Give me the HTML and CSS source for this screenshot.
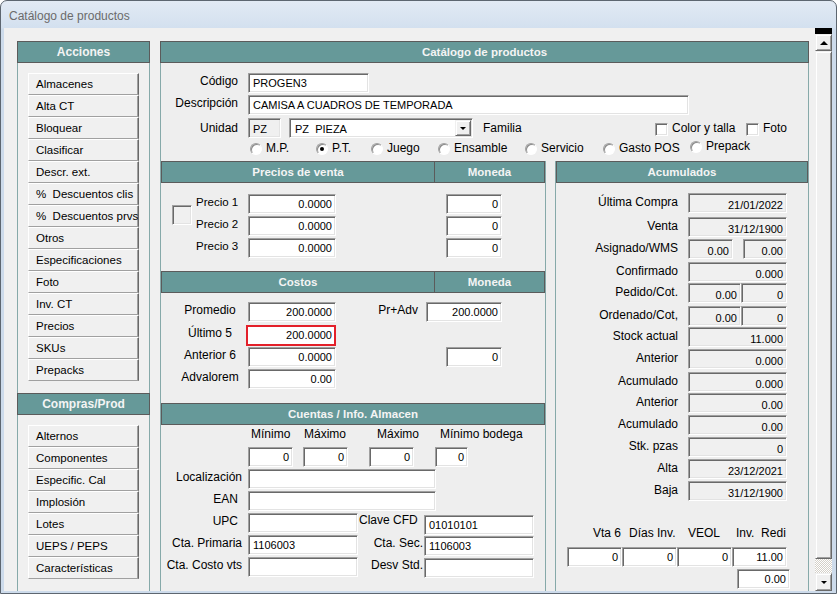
FILE: index.html
```html
<!DOCTYPE html>
<html lang="es">
<head>
<meta charset="utf-8">
<title>Catálogo de productos</title>
<link rel="stylesheet" href="styles.css">
</head>
<body>
<div class="window">
  <div class="titlebar">Catálogo de productos</div>
  <div class="client">
    <div class="content">
      <aside class="sidebar">
        <div class="hdr">Acciones</div>
        <div class="btnlist">
          <div class="btn">Almacenes</div>
          <div class="btn">Alta CT</div>
          <div class="btn">Bloquear</div>
          <div class="btn">Clasificar</div>
          <div class="btn">Descr. ext.</div>
          <div class="btn">%&nbsp; Descuentos clis</div>
          <div class="btn">%&nbsp; Descuentos prvs</div>
          <div class="btn">Otros</div>
          <div class="btn">Especificaciones</div>
          <div class="btn">Foto</div>
          <div class="btn">Inv. CT</div>
          <div class="btn">Precios</div>
          <div class="btn">SKUs</div>
          <div class="btn">Prepacks</div>
        </div>
        <div class="hdr">Compras/Prod</div>
        <div class="btnlist grow">
          <div class="btn">Alternos</div>
          <div class="btn">Componentes</div>
          <div class="btn">Especific. Cal</div>
          <div class="btn">Implosión</div>
          <div class="btn">Lotes</div>
          <div class="btn">UEPS / PEPS</div>
          <div class="btn">Características</div>
        </div>
      </aside>

      <main class="main">
        <div class="hdr wide">Catálogo de productos</div>

        <div class="topform">
          <div class="frow">
            <span class="flbl">Código</span>
            <div class="fld w-code">PROGEN3</div>
          </div>
          <div class="frow mt2">
            <span class="flbl">Descripción</span>
            <div class="fld w-desc">CAMISA A CUADROS DE TEMPORADA</div>
          </div>
          <div class="frow mt3 low">
            <span class="flbl">Unidad</span>
            <div class="fld ro w-pz">PZ</div>
            <div class="fld combo"><span class="combo-text">PZ&nbsp; PIEZA</span><span class="ddbtn"><span class="tri-down"></span></span></div>
            <span class="fam">Familia</span>
            <span class="chk"></span><span class="chklbl w-ct">Color y talla</span>
            <span class="chk"></span><span class="chklbl">Foto</span>
          </div>
          <div class="radios">
            <span class="rg g1"><span class="radio"></span>M.P.</span>
            <span class="rg g2"><span class="radio on"></span>P.T.</span>
            <span class="rg g3"><span class="radio"></span>Juego</span>
            <span class="rg g4"><span class="radio"></span>Ensamble</span>
            <span class="rg g5"><span class="radio"></span>Servicio</span>
            <span class="rg g6"><span class="radio"></span>Gasto POS</span>
            <span class="rg g7"><span class="radio"></span>Prepack</span>
          </div>
        </div>

        <div class="cols">
          <div class="lcol">
            <div class="shdr"><span class="sa">Precios de venta</span><span class="sb">Moneda</span></div>
            <div class="precios">
              <div class="fld ro psq"></div>
              <div class="prows">
                <div class="prow"><span class="plbl">Precio 1</span><div class="fld num w88">0.0000</div><div class="fld num w56 mon">0</div></div>
                <div class="prow"><span class="plbl">Precio 2</span><div class="fld num w88">0.0000</div><div class="fld num w56 mon">0</div></div>
                <div class="prow"><span class="plbl">Precio 3</span><div class="fld num w88">0.0000</div><div class="fld num w56 mon">0</div></div>
              </div>
            </div>

            <div class="shdr"><span class="sa">Costos</span><span class="sb">Moneda</span></div>
            <div class="costos">
              <div class="crow">
                <span class="clbl">Promedio</span>
                <div class="fld num w88">200.0000</div>
                <span class="padv">Pr+Adv</span>
                <div class="fld num w76">200.0000</div>
              </div>
              <div class="crow mt3">
                <span class="clbl">Último 5</span>
                <div class="fld num red">200.0000</div>
              </div>
              <div class="crow mt2">
                <span class="clbl">Anterior 6</span>
                <div class="fld num w88">0.0000</div>
                <div class="fld num w56 mon">0</div>
              </div>
              <div class="crow mt2">
                <span class="clbl">Advalorem</span>
                <div class="fld num w88">0.00</div>
              </div>
            </div>

            <div class="shdr"><span class="sfull">Cuentas / Info. Almacen</span></div>
            <div class="cuentas">
              <div class="colhdrs">
                <span class="ch1">Mínimo</span><span class="ch2">Máximo</span><span class="ch3">Máximo</span><span>Mínimo bodega</span>
              </div>
              <div class="minmax">
                <div class="fld num w45">0</div>
                <div class="fld num w45 mm2">0</div>
                <div class="fld num w45 mm3">0</div>
                <div class="fld num w33 mm3">0</div>
              </div>
              <div class="krow mt2"><span class="klbl">Localización</span><div class="fld w188"></div></div>
              <div class="krow mt2"><span class="klbl pr4">EAN</span><div class="fld w188"></div></div>
              <div class="krow mt2">
                <span class="klbl pr4">UPC</span><div class="fld w110"></div>
                <span class="cfd">Clave CFD</span><div class="fld w110 dn2">01010101</div>
              </div>
              <div class="krow mt2">
                <span class="klbl">Cta. Primaria</span><div class="fld w110">1106003</div>
                <span class="mlbl">Cta. Sec.</span><div class="fld w110 dn1">1106003</div>
              </div>
              <div class="krow mt2">
                <span class="klbl">Cta. Costo vts</span><div class="fld w110"></div>
                <span class="mlbl">Desv Std.</span><div class="fld w110 dn1"></div>
              </div>
            </div>
          </div>

          <div class="rcol">
            <div class="shdr"><span class="sfull">Acumulados</span></div>
            <div class="acum">
              <div class="arow m10"><span class="albl">Última Compra</span><div class="fld ro num abox w99">21/01/2022</div></div>
              <div class="arow m4"><span class="albl">Venta</span><div class="fld ro num abox w99">31/12/1900</div></div>
              <div class="arow m2"><span class="albl">Asignado/WMS</span><div class="fld ro num abox w45">0.00</div><div class="fld ro num abox w44 ml10">0.00</div></div>
              <div class="arow m3"><span class="albl">Confirmado</span><div class="fld ro num abox w99">0.000</div></div>
              <div class="arow m1"><span class="albl">Pedido/Cot.</span><div class="fld ro num abox w53">0.00</div><div class="fld ro num abox w46">0</div></div>
              <div class="arow m3"><span class="albl">Ordenado/Cot,</span><div class="fld ro num abox w53">0.00</div><div class="fld ro num abox w46">0</div></div>
              <div class="arow m1"><span class="albl">Stock actual</span><div class="fld ro num abox w99">11.000</div></div>
              <div class="arow m2"><span class="albl">Anterior</span><div class="fld ro num abox w99">0.000</div></div>
              <div class="arow m3"><span class="albl">Acumulado</span><div class="fld ro num abox w99">0.000</div></div>
              <div class="arow m1"><span class="albl">Anterior</span><div class="fld ro num abox w99">0.00</div></div>
              <div class="arow m2"><span class="albl">Acumulado</span><div class="fld ro num abox w99">0.00</div></div>
              <div class="arow m2"><span class="albl">Stk. pzas</span><div class="fld ro num abox w99">0</div></div>
              <div class="arow m2"><span class="albl">Alta</span><div class="fld ro num abox w99">23/12/2021</div></div>
              <div class="arow m2"><span class="albl">Baja</span><div class="fld ro num abox w99">31/12/1900</div></div>
              <div class="blbls"><span class="b1">Vta 6</span><span class="b2">Días Inv.</span><span class="b3">VEOL</span><span>Inv.&nbsp; Redi</span></div>
              <div class="binputs">
                <div class="fld num w55">0</div>
                <div class="fld num w55">0</div>
                <div class="fld num w55">0</div>
                <div class="fld num w55">11.00</div>
              </div>
              <div class="fld num w53 last">0.00</div>
            </div>
          </div>
        </div>
      </main>
    </div>

    <div class="vscroll">
      <div class="vs-black"></div>
      <div class="vs-btn"><span class="tri-up"></span></div>
      <div class="vs-thumb"></div>
      <div class="vs-track"></div>
      <div class="vs-btn down"><span class="tri-down"></span></div>
    </div>
  </div>
</div>
</body>
</html>
```

FILE: styles.css
```css
* { box-sizing: border-box; }
html, body { margin: 0; padding: 0; background: #ffffff; }
body {
  font-family: "Liberation Sans", Arial, sans-serif;
  font-size: 12px;
  color: #000;
}

/* ---------- window frame ---------- */
.window {
  width: 837px;
  height: 594px;
  border: 1px solid #5d6670;
  border-radius: 7px 7px 0 0;
  background: linear-gradient(to bottom, #e2eaf4 0, #d3e0ef 27px, #cddbeb 28px, #cddbeb 100%);
  padding: 0 4px 2px 3px;
  display: flex;
  flex-direction: column;
  overflow: hidden;
}
.titlebar {
  height: 27px;
  padding: 4px 0 0 5px;
  line-height: 23px;
  font-size: 12px;
  color: #6b6b6b;
  white-space: nowrap;
}
.client {
  height: 563px;
  background: #f0f0f0;
  display: flex;
  overflow: hidden;
}
.content {
  width: 805px;
  display: flex;
  padding: 13px 0 0 13px;
}

/* ---------- headers ---------- */
.hdr {
  height: 22px;
  border: 1px solid #5b5b5b;
  background: #669999;
  color: #f4f4f4;
  font-weight: bold;
  font-size: 11.5px;
  text-align: center;
  line-height: 20px;
  flex: none;
}
.hdr.wide { margin: 0 -1px; }

/* ---------- sidebar ---------- */
.sidebar {
  width: 133px;
  display: flex;
  flex-direction: column;
  flex: none;
}
.sidebar .hdr { font-size: 12px; }
.btnlist {
  border-left: 1px solid #86a9a9;
  border-right: 1px solid #86a9a9;
  padding: 10px 0 12px 10px;
  flex: none;
}
.btnlist.grow { flex: 1; }
.btn {
  width: 111px;
  height: 22px;
  border: 1px solid;
  border-color: #ffffff #696969 #a0a0a0 #ffffff;
  box-shadow: inset -1px 0 0 #a0a0a0;
  background: #f0f0f0;
  padding-left: 7px;
  font-size: 11.5px;
  line-height: 20px;
  white-space: nowrap;
  overflow: hidden;
}

/* ---------- main panel ---------- */
.main {
  width: 649px;
  margin-left: 10px;
  border-left: 1px solid #86a9a9;
  border-right: 1px solid #86a9a9;
  background: #eeeeee;
  display: flex;
  flex-direction: column;
  flex: none;
}
.topform {
  height: 98px;
  padding-top: 10px;
  flex: none;
}
.frow { display: flex; height: 20px; }
.mt2 { margin-top: 2px; }
.mt3 { margin-top: 3px; }
.flbl {
  width: 77px;
  margin-right: 10px;
  text-align: right;
  line-height: 17px;
  white-space: nowrap;
  flex: none;
}
.low .flbl, .low .fam, .low .chklbl { padding-top: 2px; }

/* fields */
.fld {
  height: 20px;
  border: 1px solid;
  border-color: #a0a0a0 #ffffff #ffffff #a0a0a0;
  box-shadow: inset 1px 1px 0 #696969, inset -1px -1px 0 #e3e3e3;
  background: #ffffff;
  font-size: 11px;
  line-height: 18px;
  padding: 0 4px;
  white-space: nowrap;
  overflow: hidden;
  flex: none;
}
.fld.ro { background: #f0f0f0; }
.fld.num { text-align: right; padding: 0 3px 0 2px; }
.fld.abox { padding-top: 4px; line-height: 14px; }
.w-code { width: 121px; }
.w-desc { width: 441px; }
.w-pz { width: 33px; padding-top: 2px; line-height: 16px; }
.combo {
  width: 184px;
  margin-left: 8px;
  display: flex;
  padding: 0 1px 0 5px;
}
.combo-text { flex: 1; padding-top: 2px; line-height: 16px; }
.ddbtn {
  width: 16px;
  height: 16px;
  margin-top: 1px;
  border: 1px solid;
  border-color: #f0f0f0 #696969 #696969 #f0f0f0;
  box-shadow: inset 1px 1px 0 #ffffff, inset -1px -1px 0 #a0a0a0;
  background: #f0f0f0;
  display: flex;
  align-items: center;
  justify-content: center;
}
.tri-down {
  width: 0; height: 0;
  border-left: 3px solid transparent;
  border-right: 3px solid transparent;
  border-top: 3px solid #000;
}
.tri-up {
  width: 0; height: 0;
  border-left: 4px solid transparent;
  border-right: 4px solid transparent;
  border-bottom: 4px solid #000;
}
.fam { margin-left: 10px; width: 172px; line-height: 17px; flex: none; }
.chk {
  width: 13px;
  height: 13px;
  margin-top: 5px;
  border: 1px solid;
  border-color: #a0a0a0 #ffffff #ffffff #a0a0a0;
  box-shadow: inset 1px 1px 0 #696969, inset -1px -1px 0 #e3e3e3;
  background: #fff;
  flex: none;
}
.chklbl { margin-left: 4px; line-height: 17px; white-space: nowrap; flex: none; }
.w-ct { width: 74px; }

/* radios */
.radios {
  display: flex;
  margin: 3px 0 0 89px;
  height: 15px;
}
.rg { display: flex; line-height: 15px; white-space: nowrap; flex: none; }
.g1 { width: 66px; }
.g2 { width: 55px; }
.g3 { width: 67px; }
.g4 { width: 87px; }
.g5 { width: 78px; }
.g6 { width: 87px; }
.g7 { margin-top: -2px; }
.radio {
  width: 12px;
  height: 12px;
  margin: 2px 4px 0 0;
  border-radius: 50%;
  border: 1px solid;
  border-color: #a0a0a0 #ffffff #ffffff #a0a0a0;
  box-shadow: inset 1px 1px 0 #8a8a8a;
  background: #fff;
  display: flex;
  align-items: center;
  justify-content: center;
  flex: none;
}
.radio.on::after {
  content: "";
  width: 4px;
  height: 4px;
  border-radius: 50%;
  background: #000;
}

/* columns */
.cols { flex: 1; display: flex; }
.lcol {
  width: 385px;
  border-right: 1px solid #86a9a9;
  flex: none;
}
.rcol {
  width: 253px;
  margin-left: 9px;
  border-left: 1px solid #86a9a9;
  flex: none;
}
.shdr {
  height: 22px;
  border: 1px solid #5b5b5b;
  background: #669999;
  color: #f4f4f4;
  font-weight: bold;
  font-size: 11.5px;
  line-height: 20px;
  display: flex;
  text-align: center;
}
.sa { width: 273px; border-right: 1px solid #5b5b5b; }
.sb { flex: 1; }
.sfull { flex: 1; }

/* precios */
.precios {
  height: 88px;
  display: flex;
  padding-top: 11px;
}
.psq { width: 20px; height: 20px; margin: 11px 0 0 11px; }
.prows { margin-left: 4px; }
.prow { display: flex; height: 20px; margin-bottom: 2px; }
.plbl { width: 52px; line-height: 17px; font-size: 11.5px; flex: none; }
.w99 { width: 99px; }
.w88 { width: 88px; }
.w76 { width: 76px; }
.w56 { width: 56px; }
.w55 { width: 55px; }
.w53 { width: 53px; }
.w46 { width: 46px; }
.w45 { width: 45px; }
.w44 { width: 44px; }
.w33 { width: 33px; }
.w110 { width: 110px; }
.w188 { width: 188px; }
.mon { margin-left: 110px; }

/* costos */
.costos { height: 110px; padding-top: 9px; }
.crow { display: flex; height: 20px; margin-left: 11px; }
.clbl { width: 76px; text-align: center; line-height: 17px; white-space: nowrap; flex: none; }
.padv { width: 90px; padding-right: 8px; text-align: right; line-height: 17px; flex: none; }
.fld.red {
  width: 90px;
  height: 21px;
  margin-left: -2px;
  border: 2px solid #e3202a;
  box-shadow: none;
  line-height: 17px;
  padding-right: 2px;
}

/* cuentas */
.cuentas { padding-top: 1px; }
.colhdrs { display: flex; margin-left: 90px; line-height: 16px; white-space: nowrap; }
.ch1 { width: 53px; }
.ch2 { width: 73px; }
.ch3 { width: 63px; }
.minmax { display: flex; margin: 5px 0 0 87px; height: 20px; }
.mm2 { margin-left: 10px; }
.mm3 { margin-left: 21px; }
.krow { display: flex; height: 20px; }
.klbl { width: 81px; margin-right: 6px; text-align: right; line-height: 17px; white-space: nowrap; flex: none; }
.pr4 { padding-right: 4px; }
.cfd { width: 66px; padding-left: 1px; line-height: 15px; white-space: nowrap; flex: none; }
.mlbl { width: 66px; padding-right: 1px; text-align: right; line-height: 17px; white-space: nowrap; flex: none; }
.dn2 { margin-top: 2px; }
.dn1 { margin-top: 1px; }

/* acumulados */
.acum { display: flex; flex-direction: column; }
.arow { display: flex; height: 20px; flex: none; }
.m10 { margin-top: 10px; }
.m4 { margin-top: 4px; }
.m3 { margin-top: 3px; }
.m2 { margin-top: 2px; }
.m1 { margin-top: 1px; }
.albl { width: 122px; margin-right: 10px; padding-top: 1px; text-align: right; line-height: 17px; white-space: nowrap; flex: none; }
.ml10 { margin-left: 10px; }
.blbls { display: flex; margin: 24px 0 0 37px; line-height: 16px; white-space: nowrap; }
.b1 { width: 36px; }
.b2 { width: 59px; }
.b3 { width: 48px; }
.binputs { display: flex; margin: 6px 0 0 11px; }
.last { margin: 2px 0 0 181px; }

/* ---------- scrollbar ---------- */
.vscroll {
  width: 17px;
  margin-left: 6px;
  display: flex;
  flex-direction: column;
  flex: none;
}
.vs-black { height: 6px; background: #000; }
.vs-btn {
  height: 17px;
  border: 1px solid;
  border-color: #f0f0f0 #696969 #696969 #f0f0f0;
  box-shadow: inset 1px 1px 0 #ffffff, inset -1px -1px 0 #a0a0a0;
  background: #f0f0f0;
  display: flex;
  align-items: center;
  justify-content: center;
  flex: none;
}
.vs-btn.down { height: 18px; }
.vs-thumb {
  flex: 1;
  border: 1px solid;
  border-color: #f0f0f0 #696969 #696969 #f0f0f0;
  box-shadow: inset 1px 1px 0 #ffffff, inset -1px -1px 0 #a0a0a0;
  background: #f0f0f0;
}
.vs-track {
  height: 14px;
  flex: none;
  background-color: #ffffff;
  background-image: repeating-conic-gradient(#d4d0c8 0 25%, #ffffff 0 50%);
  background-size: 2px 2px;
}
```
